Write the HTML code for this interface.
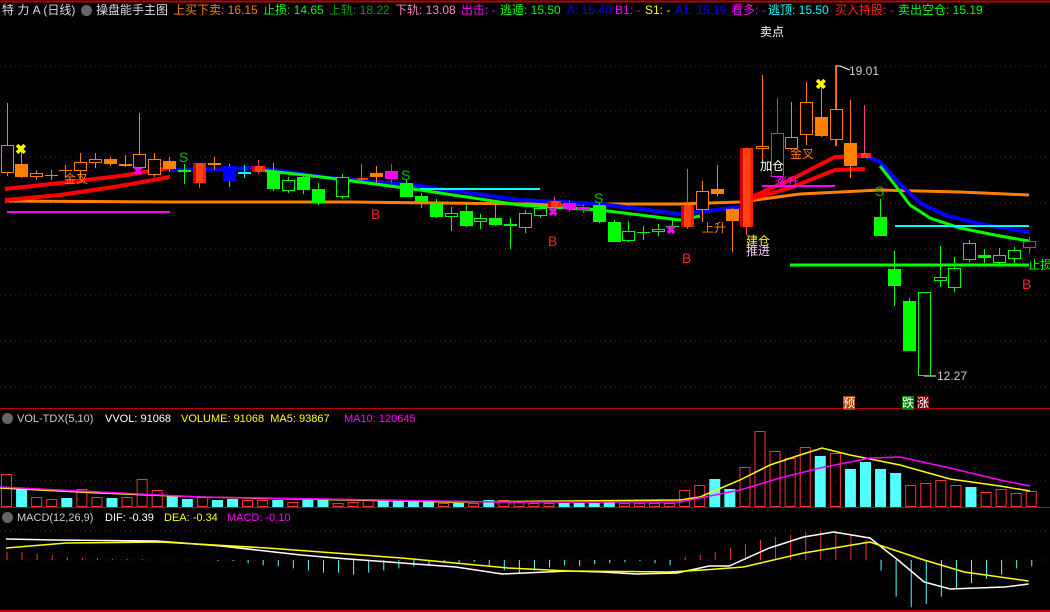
<!DOCTYPE html>
<html><head><meta charset="utf-8">
<style>
html,body{margin:0;padding:0;background:#000;width:1050px;height:612px;overflow:hidden;font-family:"Liberation Sans","Noto Sans CJK SC",sans-serif;}
.t{position:absolute;font-size:12px;white-space:nowrap;line-height:14px;}
svg{position:absolute;left:0;top:0}
</style></head><body>
<svg id="s" width="1050" height="612" xmlns="http://www.w3.org/2000/svg">
<line x1="0" y1="1.5" x2="1050" y2="1.5" stroke="#c00000" stroke-width="2"/>
<g stroke="#7a1a1a" stroke-dasharray="1,4">
<line x1="0" y1="66" x2="1050" y2="66"/><line x1="0" y1="111" x2="1050" y2="111"/><line x1="0" y1="157" x2="1050" y2="157"/><line x1="0" y1="203" x2="1050" y2="203"/><line x1="0" y1="249" x2="1050" y2="249"/><line x1="0" y1="295" x2="1050" y2="295"/><line x1="0" y1="341" x2="1050" y2="341"/><line x1="0" y1="387" x2="1050" y2="387"/>
<line x1="0" y1="455" x2="1050" y2="455"/><line x1="0" y1="481" x2="1050" y2="481"/>
<line x1="0" y1="531" x2="1050" y2="531"/><line x1="0" y1="560" x2="1050" y2="560"/>
</g>
<line x1="0" y1="408.5" x2="1050" y2="408.5" stroke="#c00000"/>
<line x1="0" y1="507.5" x2="1050" y2="507.5" stroke="#c00000"/>
<line x1="0" y1="611" x2="1050" y2="611" stroke="#c00000" stroke-width="2"/>
<polyline fill="none" stroke="#ff8000" stroke-width="3" points="5,201 176,202 350,202 530,204 680,204 740,202 800,194 880,190 960,192 1029,195"/>
<polyline fill="none" stroke="#ff0000" stroke-width="4" points="5,189 60,183 120,176 170,168"/>
<polyline fill="none" stroke="#ff0000" stroke-width="4" points="5,200 60,195 120,186 170,177"/>
<polyline fill="none" stroke="#0000ff" stroke-width="4" points="170,170 260,168 330,178 420,186 520,200 600,204 680,214 740,207"/>
<polyline fill="none" stroke="#00ff00" stroke-width="3" points="260,170 330,178 420,190 520,205 600,210 680,220 700,216"/>
<polyline fill="none" stroke="#ff0000" stroke-width="4" points="740,202 790,180 835,157 865,156"/>
<polyline fill="none" stroke="#ff0000" stroke-width="4" points="740,202 790,188 835,170 865,169"/>
<polyline fill="none" stroke="#0000ff" stroke-width="4" points="865,156 880,162 900,184 920,203 945,215 980,224 1029,232"/>
<polyline fill="none" stroke="#00ff00" stroke-width="3" points="880,166 895,185 910,205 930,218 960,228 1000,236 1029,241"/>
<line x1="420" y1="189" x2="540" y2="189" stroke="#00ffff" stroke-width="2"/>
<line x1="895" y1="226" x2="1029" y2="226" stroke="#00ffff" stroke-width="2"/>
<line x1="790" y1="265" x2="1029" y2="265" stroke="#00ff00" stroke-width="3"/>
<line x1="7" y1="212" x2="170" y2="212" stroke="#ff00ff" stroke-width="2"/>
<line x1="762" y1="186" x2="835" y2="186" stroke="#ff00ff" stroke-width="2"/>
<polyline fill="none" stroke="#ffffff" stroke-width="1" points="850,70 840,66 836,66 836,146"/>
<polyline fill="none" stroke="#ffffff" stroke-width="1" points="936,376 924,376"/>
<g id="c"></g><g id="v"></g><g id="m"></g>
<polyline fill="none" stroke="#ffff00" stroke-width="1.5" points="0,488 100,493 200,497 450,502 680,500 700,497 740,480 770,465 800,455 822,448 850,455 900,465 950,479 1000,486 1030,491"/>
<polyline fill="none" stroke="#ff00ff" stroke-width="1.5" points="0,487 200,497 500,502 680,502 740,490 780,478 820,468 870,458 900,457 950,468 1000,480 1030,486"/>
<polyline id="dif" fill="none" stroke="#ffffff" stroke-width="1.5" points="3,539 27,540 78,541 110,546 150,555 167,558 200,563 227,567 250,574 283,571 300,572 317,574 337,573 353,566 363,566 383,548 400,537 415,532 433,538 447,560 460,582 473,589 500,587 512,584"/>
<polyline id="dea" fill="none" stroke="#ffff00" stroke-width="1.5" points="3,548 33,543 80,542 133,548 200,558 253,568 283,571 333,572 350,570 370,567 400,553 433,542 460,560 480,572 512,581"/>
</svg>
<script>
(function(){
var NS="http://www.w3.org/2000/svg";
function el(p,t,a){var e=document.createElementNS(NS,t);for(var k in a)e.setAttribute(k,a[k]);p.appendChild(e);return e;}
['dif','dea'].forEach(function(id){var p=document.getElementById(id);
 var pts=p.getAttribute('points').trim().split(/\s+/).map(function(q){var a=q.split(',');return (a[0]*3*1050/1568).toFixed(1)+','+a[1];});
 p.setAttribute('points',pts.join(' '));});
var O="#ff8000",G="#00ff00",R="#ff2000",M="#ff00ff",B="#0000ff";
var C=[[7,145,172,103,176,O,0],[21,164,177,151,178,O,1],[36,173,176,170,180,O,0],[51,175,176,170,180,O,1],[65,170,171,165,178,O,1],
[80,162,170,153,178,O,0],[95,159,162,153,168,O,0],[110,159,164,157,166,O,1],[125,164,166,155,167,O,1],[139,154,167,113,170,O,0],
[154,159,174,153,177,O,0],[169,161,169,157,172,O,1],[184,170,172,164,184,G,1],[199,163,183,163,188,R,1],[214,163,165,157,170,O,1],
[229,166,181,164,187,B,1],[244,172,174,165,178,"#00ffff",1],[258,166,172,160,174,R,1],[273,172,189,163,191,G,1],[288,180,190,177,193,G,0],
[303,177,190,176,194,G,1],[318,189,203,183,205,G,1],[342,177,196,174,199,G,0],[361,178,180,164,184,R,1],[376,173,177,166,183,O,1],
[391,171,179,164,183,M,1],[406,183,197,180,197,G,1],[421,196,202,193,208,G,1],[436,204,217,199,218,G,1],[451,213,216,207,231,G,0],
[466,211,226,203,227,G,1],[480,218,221,214,229,G,0],[495,218,225,205,226,G,1],[510,224,226,218,249,G,1],[525,213,227,210,233,G,0],
[540,208,215,205,218,G,0],[554,201,207,197,211,R,1],[569,203,209,200,212,M,1],[583,207,210,204,213,M,1],[599,205,222,203,223,G,1],
[614,222,242,220,242,G,1],[628,231,240,221,242,G,0],[643,232,233,226,240,G,1],[658,229,231,224,236,G,0],[672,226,227,220,230,G,1],
[687,205,227,169,229,R,1],[702,191,209,181,222,O,0],[717,189,194,165,196,O,1],[732,209,221,208,252,O,1],[746,148,227,148,235,R,1],
[762,146,148,75,160,O,0],[777,133,176,98,178,M,0],[791,137,148,102,150,O,0],[806,102,134,82,145,O,0],[821,117,136,84,137,O,1],
[836,109,139,66,146,O,0],[850,143,166,100,178,O,1],[864,153,158,105,158,R,1],[880,217,236,199,236,G,1],[894,269,286,251,306,G,1],
[909,301,351,298,351,G,1],[924,292,375,292,375,G,0],[940,277,280,246,287,G,0],[954,268,287,257,292,G,0],[969,243,259,240,262,G,0],
[984,255,258,249,263,G,1],[999,255,262,248,264,G,0],[1014,250,258,247,263,G,0],[1029,241,247,237,254,M,0]];
var cg=document.getElementById('c');
C.forEach(function(c){
 var wc=c[5]==R?"#ff4080":(c[5]==B?G:c[5]);
 el(cg,'line',{x1:c[0]+.5,x2:c[0]+.5,y1:c[3],y2:c[4],stroke:wc});
 var h=Math.max(c[2]-c[1],1);
 if(c[6]){ el(cg,'rect',{x:c[0]-6,y:c[1],width:13,height:h,fill:c[5]});
   if(c[5]==R) el(cg,'rect',{x:c[0]-3,y:c[1],width:7,height:h,fill:"#ff4010"});
   if(c[5]==R) el(cg,'rect',{x:c[0]-6,y:c[1],width:3,height:h,fill:"#d00000"});}
 else el(cg,'rect',{x:c[0]-5.5,y:c[1]+.5,width:12,height:h,fill:"#000",stroke:c[5]});
});
var VT=[474,488,497,499,498,489,497,498,497,479,490,496,499,497,500,499,500,500,500,502,500,500,503,502,500,501,501,502,502,503,503,503,500,500,502,
503,503,503,503,503,501,503,503,503,503,490,485,479,489,467,431,451,458,447,456,453,469,462,469,473,485,483,480,485,487,492,489,493,491];
var VC="rcrrcrrcrrrccrccrrcrccrrrccccrcrcrr"+"rrcccc"+"rrrrrrcc"+"rrrrrcrccccrrrrcrrr";
var vg=document.getElementById('v');
VT.forEach(function(t,i){var x=1+15.07*i;var col=VC[i]=='c';
 if(col) el(vg,'rect',{x:x,y:t,width:11,height:507-t,fill:"#54ffff"});
 else el(vg,'rect',{x:x+.5,y:t+.5,width:10,height:506-t,fill:"none",stroke:"#ff3030"});
});
var MH=[8,8,6,5,3,2,2,1,1,1,0,0,0,0,-1,-1,-3,-5,-6,-8,-10,-12,-12,-14,-12,-10,-8,-6,-5,-3,-3,-2,-6,-10,-12,-10,-7,-5,-6,-4,-3,-2,-1,-3,-5,3,5,8,12,16,20,23,25,28,29,27,25,20,-10,-35,-45,-42,-35,-28,-22,-18,-14,-8,-6];
var mg=document.getElementById('m');
MH.forEach(function(h,i){var x=7+15.07*i;if(!h)return;var hh=h>0?h*1.0:h*1.05;
 el(mg,'line',{x1:x,x2:x,y1:560,y2:560-hh,stroke:h>0?"#ff3030":"#54ffff"});});
})();
</script>
<div class="t" style="left:2px;top:3px;color:#ddd">特 力 A (日线)</div>
<div style="position:absolute;left:81px;top:5px;width:11px;height:11px;border-radius:50%;background:#666"></div>
<div class="t" style="left:96px;top:3px;color:#ddd">操盘能手主图</div>
<div class="t" style="left:173px;top:3px;color:#ff8000">上买下卖: 16.15</div>
<div class="t" style="left:263px;top:3px;color:#00ff00">止损: 14.65</div>
<div class="t" style="left:329px;top:3px;color:#00a000">上轨: 18.22</div>
<div class="t" style="left:395px;top:3px;color:#ff80c0">下轨: 13.08</div>
<div class="t" style="left:461px;top:3px;color:#ff00ff">出击: -</div>
<div class="t" style="left:500px;top:3px;color:#00ff00">逃遁: 15.50</div>
<div class="t" style="left:567px;top:3px;color:#0000ff">A: 15.40</div>
<div class="t" style="left:615px;top:3px;color:#ff00ff">B1: -</div>
<div class="t" style="left:645px;top:3px;color:#ffff00">S1: -</div>
<div class="t" style="left:675px;top:3px;color:#0000ff">A1: 15.19</div>
<div class="t" style="left:731px;top:3px;color:#ff00ff">看多: -</div>
<div class="t" style="left:768px;top:3px;color:#00ffff">逃顶: 15.50</div>
<div class="t" style="left:835px;top:3px;color:#ff2020">买入持股: -</div>
<div class="t" style="left:898px;top:3px;color:#00ff00">卖出空仓: 15.19</div>
<div class="t" style="left:760px;top:25px;color:#fff">卖点</div>
<div class="t" style="left:849px;top:64px;color:#ccc">19.01</div>
<div class="t" style="left:937px;top:369px;color:#ccc">12.27</div>
<div class="t" style="left:15px;top:142px;color:#ffff00;font-weight:bold;font-size:14px">✖</div>
<div class="t" style="left:815px;top:77px;color:#ffff00;font-weight:bold;font-size:14px">✖</div>
<div class="t" style="left:133px;top:164px;color:#ff00ff;font-weight:bold">✖</div>
<div class="t" style="left:548px;top:205px;color:#ff00ff;font-weight:bold">✖</div>
<div class="t" style="left:666px;top:223px;color:#ff00ff;font-weight:bold">✖</div>
<div class="t" style="left:64px;top:172px;color:#ff8000">金叉</div>
<div class="t" style="left:790px;top:147px;color:#ff8000">金叉</div>
<div class="t" style="left:760px;top:159px;color:#fff">加仓</div>
<div class="t" style="left:775px;top:175px;color:#ff00ff">涨升</div>
<div class="t" style="left:702px;top:221px;color:#ff8000">上升</div>
<div class="t" style="left:746px;top:234px;color:#ffff00">建仓</div>
<div class="t" style="left:746px;top:244px;color:#ffc0ff">推进</div>
<div class="t" style="left:1028px;top:258px;color:#00ff00">止损</div>
<div class="t" style="left:371px;top:207px;color:#ff2020;font-size:14px">B</div>
<div class="t" style="left:548px;top:234px;color:#ff2020;font-size:14px">B</div>
<div class="t" style="left:682px;top:251px;color:#ff2020;font-size:14px">B</div>
<div class="t" style="left:1022px;top:277px;color:#ff2020;font-size:14px">B</div>
<div class="t" style="left:179px;top:150px;color:#00c000;font-size:14px">S</div>
<div class="t" style="left:401px;top:168px;color:#00c000;font-size:14px">S</div>
<div class="t" style="left:594px;top:191px;color:#00c000;font-size:14px">S</div>
<div class="t" style="left:875px;top:184px;color:#00c000;font-size:14px">S</div>
<div class="t" style="left:843px;top:396px;color:#fff;background:#b04000;font-size:12px">预</div>
<div class="t" style="left:902px;top:396px;color:#fff;background:#008000;font-size:12px">跌</div>
<div class="t" style="left:917px;top:396px;color:#fff;background:#800000;font-size:12px">涨</div>
<div style="position:absolute;left:2px;top:413px;width:11px;height:11px;border-radius:50%;background:#666"></div>
<div class="t" style="left:17px;top:412px;font-size:11px;color:#ccc">VOL-TDX(5,10)</div>
<div class="t" style="left:105px;top:412px;font-size:11px;color:#fff">VVOL: 91068</div>
<div class="t" style="left:181px;top:412px;font-size:11px;color:#ffff00">VOLUME: 91068&nbsp; MA5: 93867</div>
<div class="t" style="left:344px;top:412px;font-size:11px;color:#ff00ff">MA10: 120645</div>
<div style="position:absolute;left:2px;top:512px;width:11px;height:11px;border-radius:50%;background:#666"></div>
<div class="t" style="left:17px;top:511px;font-size:11px;color:#ccc">MACD(12,26,9)</div>
<div class="t" style="left:105px;top:511px;font-size:11px;color:#fff">DIF: -0.39</div>
<div class="t" style="left:164px;top:511px;font-size:11px;color:#ffff00">DEA: -0.34</div>
<div class="t" style="left:227px;top:511px;font-size:11px;color:#ff00ff">MACD: -0.10</div>
</body></html>
